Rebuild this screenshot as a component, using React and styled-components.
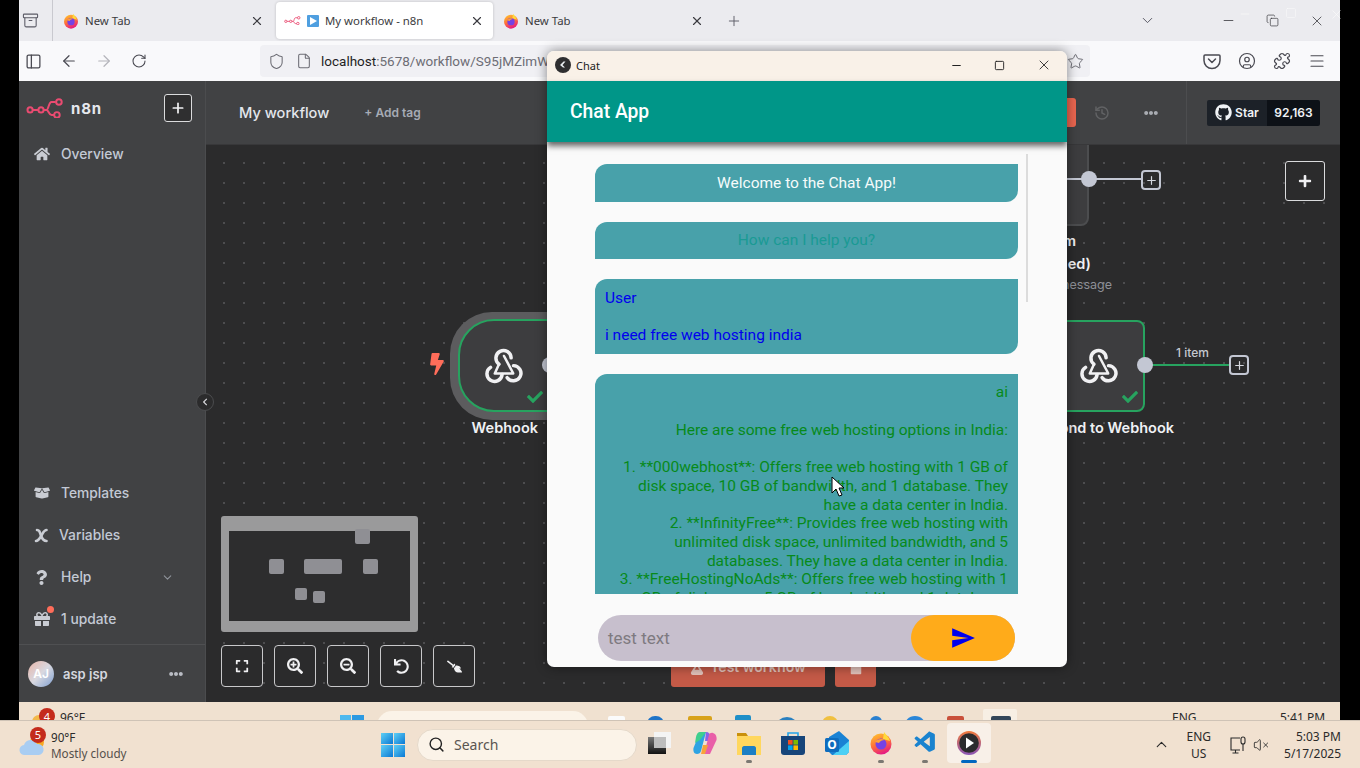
import React from "react";
import styled, { createGlobalStyle } from "styled-components";
import {
  ArrowLeft,
  ArrowRight,
  ChevronDown,
  ChevronUp,
  CircleUser,
  File,
  Menu,
  Minus,
  PanelLeft,
  Plus,
  Puzzle,
  RotateCw,
  Search as SearchIcon,
  Shield,
  Square,
  Star,
  X,
  Copy,
  History,
  VolumeX,
  Archive,
} from "lucide-react";
import {
  FaBolt,
  FaBoxOpen,
  FaBroom,
  FaCheck,
  FaChevronLeft,
  FaEllipsisH,
  FaExpand,
  FaFlask,
  FaGift,
  FaGithub,
  FaHome,
  FaPlus,
  FaQuestion,
  FaSearchMinus,
  FaSearchPlus,
  FaStop,
  FaUndo,
} from "react-icons/fa";
import { MdSend } from "react-icons/md";
import { VscVscode } from "react-icons/vsc";

const GlobalStyle = createGlobalStyle`
  html, body {
    margin: 0;
    padding: 0;
    background: #000;
    overflow: hidden;
  }
  * { box-sizing: border-box; }
`;

const Screen = styled.div`
  position: relative;
  width: 1360px;
  height: 768px;
  overflow: hidden;
  background: #000;
  font-family: "Inter", sans-serif;
`;

const Recording = styled.div`
  width: 1321px;
  height: 720px;
  margin-left: 19px;
  display: flex;
  flex-direction: column;
`;

/* firefox tab strip */
const TabStrip = styled.div`
  height: 41px;
  flex: none;
  background: #ebebef;
  display: flex;
  align-items: center;
  font-family: "Noto Sans", sans-serif;
  font-size: 11.4px;
  color: #3b3b40;
`;

const StripIcon = styled.div`
  width: 22px;
  margin-right: 11px;
  display: flex;
  justify-content: center;
  color: #5b5b66;
`;

const StripDivider = styled.div`
  width: 1px;
  height: 41px;
  background: #c9c9cf;
  margin-right: 3px;
`;

const Tab = styled.div`
  width: 217px;
  height: 37px;
  margin-right: 3px;
  border-radius: 4px;
  padding: 0 9px 0 ${(p) => (p.$active ? "8px" : "7px")};
  display: flex;
  align-items: center;
  gap: 6px;
  background: ${(p) => (p.$active ? "#fff" : "transparent")};
  box-shadow: ${(p) => (p.$active ? "0 0 3px rgba(0,0,0,.2)" : "none")};
`;

const TabTitle = styled.span`
  flex: 1;
  white-space: nowrap;
`;

const PlayFav = styled.span`
  width: 12px;
  height: 12px;
  background: #4f9fe0;
  border-radius: 1px;
  display: flex;
  align-items: center;
  justify-content: center;
  &::after {
    content: "";
    border-left: 7px solid #fff;
    border-top: 4px solid transparent;
    border-bottom: 4px solid transparent;
    margin-left: 1px;
  }
`;

const NewTab = styled.div`
  margin-left: 10px;
  color: #5b5b66;
  display: flex;
`;

const ListTabs = styled.div`
  margin-left: 397px;
  color: #5b5b66;
  display: flex;
`;

const WinControls = styled.div`
  margin-left: 65px;
  display: flex;
  gap: 30px;
  color: #3b3b40;
  align-items: center;
`;

const Ghost = styled.span`
  position: absolute;
  top: 7px;
  left: ${(p) => p.$x}px;
  color: #fff;
  opacity: 0.85;
  display: flex;
`;

/* firefox nav bar */
const NavBar = styled.div`
  height: 40px;
  flex: none;
  background: #f9f9fb;
  display: flex;
  align-items: center;
  color: #5b5b66;
`;

const NavButton = styled.div`
  width: ${(p) => (p.$first ? "28px" : "35px")};
  margin-right: ${(p) => (p.$first ? "4px" : "0")};
  display: flex;
  justify-content: center;
  color: ${(p) => (p.$off ? "#b4b4ba" : "#4a4a52")};
`;

const UrlBar = styled.div`
  width: 830px;
  height: 32px;
  margin-left: 104px;
  background: #f0f0f4;
  border-radius: 4px;
  display: flex;
  align-items: center;
  padding: 0 6px 0 8px;
  gap: 11px;
  font-family: "Roboto", sans-serif;
  font-size: 13.5px;
  color: #6d6d75;
  overflow: hidden;
  white-space: nowrap;
`;

const UrlHost = styled.span`
  color: #1f1f25;
`;

const UrlText = styled.span`
  flex: 1;
  margin-left: -2px;
`;

const NavRight = styled.div`
  margin-left: 113px;
  display: flex;
  gap: 17px;
  color: #4a4a52;
`;

/* n8n */
const N8nApp = styled.div`
  height: 621px;
  flex: none;
  display: flex;
  background: #2b2b2c;
`;

const Sidebar = styled.div`
  width: 187px;
  flex: none;
  background: #414244;
  border-right: 1px solid #4b4c4e;
  display: flex;
  flex-direction: column;
  color: #c3c9d5;
`;

const SideHead = styled.div`
  height: 52px;
  padding: 2px 13px 0 7px;
  display: flex;
  align-items: center;
`;

const Brand = styled.span`
  margin-left: 7px;
  flex: 1;
  font-size: 15px;
  font-weight: 700;
  letter-spacing: 0.8px;
  color: #e6e8ee;
`;

const SquareBtn = styled.button`
  width: ${(p) => p.$size || 28}px;
  height: ${(p) => p.$size || 28}px;
  padding: 0;
  background: #2f2f30;
  color: #f0f0f2;
  border: 1.5px solid #dadbdd;
  border-radius: 3px;
  display: flex;
  align-items: center;
  justify-content: center;
`;

const SideItem = styled.div`
  height: 42px;
  display: flex;
  align-items: center;
  padding-left: 15px;
  font-size: 13.8px;
  font-weight: 500;
  position: relative;
`;

const SideIcon = styled.span`
  width: ${(p) => p.$w || 27}px;
  display: flex;
  color: #c9ccd3;
`;

const SideSpacer = styled.div`
  flex: 1;
`;

const HelpChevron = styled.span`
  margin-left: auto;
  margin-right: 31px;
  display: flex;
  color: #8f939b;
`;

const RedDot = styled.span`
  position: absolute;
  left: 28px;
  top: 8px;
  width: 7px;
  height: 7px;
  border-radius: 50%;
  background: #ff6d5a;
`;

const UserRow = styled.div`
  height: 58px;
  margin-top: 4px;
  border-top: 1px solid #4f5052;
  display: flex;
  align-items: center;
  padding: 0 22px 0 9px;
  font-size: 13px;
  font-weight: 600;
  color: #d5d8df;
`;

const Avatar = styled.span`
  width: 26px;
  height: 26px;
  border-radius: 50%;
  background: linear-gradient(135deg, #e8b5a8, #d8d8e0 50%, #7f9fd0);
  color: #fff;
  font-size: 12px;
  font-weight: 600;
  display: flex;
  align-items: center;
  justify-content: center;
  margin-right: 9px;
`;

const UserName = styled.span`
  flex: 1;
`;

const Main = styled.div`
  flex: 1;
  display: flex;
  flex-direction: column;
  min-width: 0;
`;

const TopBar = styled.div`
  height: 64px;
  flex: none;
  position: relative;
  z-index: 1;
  background: #414244;
  border-bottom: 1px solid #38383a;
  display: flex;
  align-items: center;
  padding: 0 20px 0 33px;
  white-space: nowrap;
`;

const WorkflowName = styled.span`
  flex: none;
  font-size: 14.6px;
  font-weight: 500;
  color: #e3e6ec;
`;

const AddTag = styled.span`
  flex: none;
  margin-left: 35px;
  font-size: 12px;
  font-weight: 600;
  color: #a6abb5;
`;

const SaveEdge = styled.div`
  margin-left: auto;
  width: 9px;
  height: 29px;
  background: #ea6650;
  border-radius: 0 3px 3px 0;
`;

const TopIcon = styled.span`
  margin-left: ${(p) => p.$ml}px;
  color: ${(p) => p.$color};
  display: flex;
`;

const TopDivider = styled.div`
  width: 1px;
  height: 63px;
  margin-left: 28px;
  background: #4c4d4f;
`;

const StarWidget = styled.div`
  margin-left: 20px;
  height: 26px;
  display: flex;
  font-size: 12px;
  font-weight: 600;
  color: #f0f3f6;
`;

const StarLabel = styled.span`
  width: 60px;
  background: #1c2128;
  border-radius: 2px 0 0 2px;
  display: flex;
  align-items: center;
  justify-content: center;
  gap: 3px;
`;

const StarCount = styled.span`
  width: 53px;
  background: #0d1117;
  border-radius: 0 2px 2px 0;
  display: flex;
  align-items: center;
  justify-content: center;
`;

const Canvas = styled.div`
  flex: 1;
  position: relative;
  background-color: #2b2b2c;
  background-image: radial-gradient(#4d4d4f 0.8px, transparent 1px);
  background-size: 20px 20px;
  background-position: 8px 8px;
`;

const Collapse = styled.span`
  position: absolute;
  left: -10px;
  top: 248px;
  width: 18px;
  height: 18px;
  border-radius: 50%;
  background: #2b2b2c;
  border: 1px solid #4b4c4e;
  color: #d8d8dc;
  display: flex;
  align-items: center;
  justify-content: center;
`;

const NodeHalo = styled.div`
  position: absolute;
  left: 244px;
  top: 167px;
  width: 140px;
  height: 108px;
  border-radius: 42px;
  background: #5c5c5e;
`;

const NodeCard = styled.div`
  position: absolute;
  left: ${(p) => p.$x}px;
  top: ${(p) => p.$y}px;
  width: ${(p) => p.$w}px;
  height: ${(p) => p.$h}px;
  border: 2px solid ${(p) => p.$border};
  border-radius: ${(p) => p.$radius || "8px"};
  background: #3d3d3f;
  color: #eceef1;
`;

const NodeGlyph = styled.span`
  position: absolute;
  left: ${(p) => p.$x}px;
  top: ${(p) => p.$y}px;
  color: #f1f1f3;
  display: flex;
`;

const NodeCheck = styled.span`
  position: absolute;
  left: ${(p) => p.$x}px;
  top: ${(p) => p.$y}px;
  color: #27a35f;
  display: flex;
`;

const Trigger = styled.span`
  position: absolute;
  left: 220px;
  top: 208px;
  color: #ff6d5a;
  display: flex;
`;

const Handle = styled.span`
  position: absolute;
  left: ${(p) => p.$x - 8}px;
  top: ${(p) => p.$y - 8}px;
  width: 16px;
  height: 16px;
  border-radius: 50%;
  background: #c3c7d3;
`;

const Wire = styled.span`
  position: absolute;
  left: ${(p) => p.$x}px;
  top: ${(p) => p.$y}px;
  width: ${(p) => p.$w}px;
  height: 2px;
  background: ${(p) => p.$color};
`;

const PlusBox = styled.span`
  position: absolute;
  left: ${(p) => p.$x}px;
  top: ${(p) => p.$y}px;
  width: 20px;
  height: 20px;
  border: 2px solid #c3c7d3;
  border-radius: 4px;
  color: #d5d8df;
  display: flex;
  align-items: center;
  justify-content: center;
`;

const NodeLabel = styled.span`
  position: absolute;
  right: ${(p) => 1134 - p.$right}px;
  top: ${(p) => p.$y}px;
  font-size: ${(p) => p.$size || 14.5}px;
  font-weight: ${(p) => p.$weight || 600};
  color: ${(p) => p.$color || "#f0f1f4"};
  white-space: nowrap;
`;

const AddNode = styled(SquareBtn)`
  position: absolute;
  left: 1079px;
  top: 16px;
  background: #2b2b2c;
`;

const Minimap = styled.div`
  position: absolute;
  left: 15px;
  top: 371px;
  width: 197px;
  height: 116px;
  background: #2d2d2e;
  border: solid #9a9a9b;
  border-width: 15px 8px 11px 8px;
  border-radius: 3px;
`;

const MiniNode = styled.span`
  position: absolute;
  left: ${(p) => p.$x}px;
  top: ${(p) => p.$y}px;
  width: ${(p) => p.$w}px;
  height: ${(p) => p.$h}px;
  background: #8f8f94;
  border-radius: 2px;
`;

const Tools = styled.div`
  position: absolute;
  left: 15px;
  top: 500px;
  display: flex;
  gap: 11px;
`;

const ToolBtn = styled(SquareBtn)`
  background: #2b2b2c;
  border-color: #c8c8ca;
  border-radius: 4px;
`;

const MirroredBroom = styled(FaBroom)`
  transform: scaleX(-1);
`;

const TestButtons = styled.div`
  position: absolute;
  left: 465px;
  top: 500px;
  display: flex;
  gap: 10px;
`;

const TestBtn = styled.div`
  height: 42px;
  width: ${(p) => p.$w}px;
  background: #c45a47;
  border-radius: 3px;
  color: #e2c3bb;
  font-size: 14px;
  font-weight: 600;
  display: flex;
  align-items: flex-end;
  justify-content: center;
  gap: 6px;
  padding-bottom: 12px;
`;

/* taskbars */
const InnerBar = styled.div`
  height: 18px;
  flex: none;
  background: #f0e1d0;
  overflow: hidden;
  position: relative;
  font-family: "Noto Sans", sans-serif;
  font-size: 12px;
  color: #2a2a2a;
`;

const InnerText = styled.span`
  position: absolute;
  left: ${(p) => p.$x - 19}px;
  top: 7px;
  white-space: nowrap;
`;

const InnerPill = styled.span`
  position: absolute;
  left: 358px;
  top: 9px;
  width: 211px;
  height: 30px;
  border-radius: 15px;
  background: #fbf3e8;
`;

const Peek = styled.span`
  position: absolute;
  left: ${(p) => p.$x - 19}px;
  top: ${(p) => p.$y}px;
  width: ${(p) => p.$w}px;
  height: 20px;
  border-radius: ${(p) => p.$radius || "2px 2px 0 0"};
  background: ${(p) => p.$color};
`;

const Badge = styled.span`
  position: absolute;
  left: ${(p) => p.$x}px;
  top: ${(p) => p.$y}px;
  width: 16px;
  height: 16px;
  border-radius: 50%;
  background: #c42b1c;
  color: #fff;
  font-size: 11px;
  display: flex;
  align-items: center;
  justify-content: center;
`;

const Taskbar = styled.div`
  height: 48px;
  background: #f1e1d0;
  border-top: 1px solid #cfc3b6;
  display: flex;
  align-items: center;
  font-family: "Noto Sans", sans-serif;
  color: #2a2a2a;
`;

const Weather = styled.div`
  width: 381px;
  flex: none;
  padding-left: 19px;
  display: flex;
  align-items: center;
  gap: 6px;
  position: relative;
`;

const WeatherText = styled.div`
  font-size: 11.7px;
  line-height: 16px;
`;

const WeatherSub = styled.div`
  color: #55504b;
`;

const StartBtn = styled.div`
  width: 24px;
  height: 24px;
  flex: none;
  display: grid;
  grid-template-columns: 1fr 1fr;
  gap: 1px;
`;

const WinPane = styled.span`
  background: linear-gradient(135deg, #5fd0f5, #0a78d4);
`;

const SearchPill = styled.div`
  width: 220px;
  height: 32px;
  margin-left: 12px;
  flex: none;
  background: #fbf3e8;
  border: 1px solid #e5d9ca;
  border-radius: 16px;
  display: flex;
  align-items: center;
  gap: 9px;
  padding-left: 10px;
  font-size: 14px;
  color: #5a5550;
`;

const TaskIcons = styled.div`
  display: flex;
  align-items: center;
  flex: none;
`;

const TaskIcon = styled.div`
  width: ${(p) => p.$w || 44}px;
  height: 40px;
  margin-top: -4px;
  position: relative;
  display: flex;
  align-items: center;
  justify-content: center;
  border-radius: 4px;
  background: ${(p) => (p.$active ? "rgba(255,255,255,.5)" : "transparent")};
  &::after {
    content: "";
    display: ${(p) => (p.$run || p.$active ? "block" : "none")};
    position: absolute;
    bottom: 0;
    left: 50%;
    transform: translateX(-50%);
    width: ${(p) => (p.$active ? "16px" : "6px")};
    height: 3px;
    border-radius: 2px;
    background: ${(p) => (p.$active ? "#0067c0" : "#7b7872")};
  }
`;

const Tray = styled.div`
  margin-left: auto;
  padding-right: 19px;
  display: flex;
  align-items: center;
  font-size: 12px;
  color: #2a2a2a;
`;

const TrayStack = styled.div`
  text-align: ${(p) => p.$align};
  line-height: 17px;
  margin-left: ${(p) => p.$ml}px;
`;

const TrayIcon = styled.span`
  display: flex;
  margin-left: ${(p) => p.$ml}px;
`;

/* chat window */
const ChatWindow = styled.div`
  position: absolute;
  left: 547px;
  top: 51px;
  width: 520px;
  height: 616px;
  background: #fafafa;
  border-radius: 7px;
  overflow: hidden;
  box-shadow: 0 0 12px rgba(0, 0, 0, 0.45);
  display: flex;
  flex-direction: column;
  font-family: "Roboto", sans-serif;
  z-index: 5;
`;

const ChatTitleBar = styled.div`
  height: 30px;
  flex: none;
  background: #f9f1e8;
  display: flex;
  align-items: center;
  padding: 0 0 2px 8px;
  font-family: "Noto Sans", sans-serif;
  font-size: 11px;
  color: #222;
`;

const ChatTitle = styled.span`
  margin-left: 5px;
  flex: 1;
`;

const ChatControls = styled.div`
  display: flex;
  gap: 31px;
  padding-right: 15px;
  color: #222;
  align-items: center;
`;

const AppBar = styled.div`
  height: 61px;
  flex: none;
  background: #009688;
  color: #fff;
  display: flex;
  align-items: center;
  padding-left: 23px;
  font-size: 19.3px;
  font-weight: 500;
  box-shadow: 0 4px 6px rgba(0, 0, 0, 0.6);
  position: relative;
  z-index: 1;
`;

const MessageArea = styled.div`
  height: 452px;
  flex: none;
  position: relative;
  overflow: hidden;
  padding: 22px 49px 0 48px;
  display: flex;
  flex-direction: column;
  gap: 19.8px;
`;

const ScrollThumb = styled.span`
  position: absolute;
  left: 479px;
  top: 12px;
  width: 2px;
  height: 148px;
  background: #dcdcdc;
`;

const Bubble = styled.div`
  flex: none;
  background: #48a1aa;
  border-radius: 12px 0 12px 0;
  padding: 9.5px 10px;
  font-size: 15.5px;
  line-height: 18.7px;
  white-space: pre-line;
  color: ${(p) => p.$color};
  text-align: ${(p) => p.$align};
`;

const Composer = styled.div`
  margin: 21px 52px 0 51px;
  height: 46px;
  border-radius: 23px;
  background: #c7bfcd;
  display: flex;
  align-items: center;
  justify-content: space-between;
  padding-left: 10px;
  font-size: 17px;
  color: #7e7a80;
`;

const SendBtn = styled.div`
  width: 104px;
  height: 46px;
  border-radius: 23px;
  background: #ffab1a;
  color: #0000ee;
  display: flex;
  align-items: center;
  justify-content: center;
`;

const Pointer = styled.svg`
  position: absolute;
  left: 830px;
  top: 476px;
  z-index: 6;
`;

const aiText = `ai

Here are some free web hosting options in India:

1. **000webhost**: Offers free web hosting with 1 GB of disk space, 10 GB of bandwidth, and 1 database. They have a data center in India.
2. **InfinityFree**: Provides free web hosting with unlimited disk space, unlimited bandwidth, and 5 databases. They have a data center in India.
3. **FreeHostingNoAds**: Offers free web hosting with 1 GB of disk space, 5 GB of bandwidth, and 1 database.`;

const N8nLogo = ({ w = 38 }) => (
  <svg width={w} height={w * 0.55} viewBox="0 0 38 21" fill="none" stroke="#ea4b71" strokeWidth="2">
    <circle cx="4" cy="12" r="2.6" />
    <circle cx="15" cy="12" r="2.6" />
    <circle cx="33" cy="4" r="2.8" />
    <circle cx="31" cy="17" r="2.8" />
    <path d="M6.6 12h5.800M17.600 12h3c2 0 2-8 5-8h4.200M20.600 12c2 0 2 5 5 5h2.600" />
  </svg>
);

const WebhookGlyph = ({ size = 38 }) => (
  <svg width={size} height={size} viewBox="0 0 24 24" fill="none" stroke="currentColor" strokeLinecap="round" strokeWidth="2.2">
    <path d="M8.800 11.500A4.800 4.800 0 1 1 16.500 7.500" />
    <path d="M3.500 13.500A4.800 4.800 0 1 0 10.800 18" />
    <path d="M18 12.400A4.800 4.800 0 1 1 14 20" />
    <path d="M12 6.300L17.800 17.200M6.200 17.400H17.800M6.200 17.400L8.800 11.500" strokeWidth="1.600" />
  </svg>
);

const Firefox = ({ size = 16, id = "ff" }) => (
  <svg width={size} height={size} viewBox="0 0 24 24">
    <defs>
      <linearGradient id={id} x1="0.2" y1="0" x2="0.6" y2="1">
        <stop offset="0" stopColor="#ffc22e" />
        <stop offset="0.5" stopColor="#ff7139" />
        <stop offset="1" stopColor="#e31587" />
      </linearGradient>
    </defs>
    <circle cx="12" cy="13" r="10.500" fill={`url(#${id})`} />
    <path d="M15 1c2 3 5 5 6 9l-7-2z" fill="#ffd93b" />
    <circle cx="12" cy="13" r="5.500" fill="#7542e5" />
    <path d="M6 11c2-3 7-4 10-2-3 0-5 1-6 3z" fill="#ffa436" />
  </svg>
);

const TaskViewIcon = () => (
  <svg width="24" height="24" viewBox="0 0 24 24">
    <defs>
      <linearGradient id="tv1" x1="0" y1="0" x2="0" y2="1">
        <stop offset="0" stopColor="#777" />
        <stop offset="1" stopColor="#111" />
      </linearGradient>
    </defs>
    <rect x="0" y="6" width="18" height="17" fill="url(#tv1)" />
    <rect x="6" y="1" width="17" height="16" fill="#f4f4f4" />
    <rect x="6" y="6" width="12" height="11" fill="#bdbdbd" />
  </svg>
);

const CopilotIcon = () => (
  <svg width="24" height="24" viewBox="0 0 24 24">
    <path d="M7 1h6L8 20c-.5 2-2 3-4 3-3 0-4-3-3.500-6z" fill="#2ea3e3" />
    <path d="M7 1c-2 0-3.500 2-4 5l-1 6 5-3 6-8z" fill="#3fcf8e" />
    <path d="M13 1c3 0 4 2 5 5l1 4h-7z" fill="#8a63e8" />
    <path d="M17 23h-6l5-19c.5-1.500 2-2.500 4-2 3 1 4 4 3.500 7z" fill="#e95fa8" />
    <path d="M8 23l2-9h5l-3 9z" fill="#f7a33a" />
  </svg>
);

const ExplorerIcon = () => (
  <svg width="24" height="24" viewBox="0 0 24 24">
    <path d="M0 2h9l2 3h13v19H0z" fill="#c9900c" />
    <rect x="0" y="5" width="24" height="19" fill="#ffd75e" />
    <path d="M5 17c0-1 1-2 2-2h10c1 0 2 1 2 2v7H5z" fill="#1c7fc4" />
  </svg>
);

const StoreIcon = () => (
  <svg width="24" height="24" viewBox="0 0 24 24">
    <path d="M7 6V2h10v4" fill="none" stroke="#25a4e8" strokeWidth="1.600" />
    <path d="M0 5h24v16a3 3 0 0 1-3 3H3a3 3 0 0 1-3-3z" fill="#17457a" />
    <rect x="7" y="9" width="4.600" height="4.600" fill="#f25022" />
    <rect x="12.400" y="9" width="4.600" height="4.600" fill="#7fba00" />
    <rect x="7" y="14.400" width="4.600" height="4.600" fill="#00a4ef" />
    <rect x="12.400" y="14.400" width="4.600" height="4.600" fill="#ffb900" />
  </svg>
);

const OutlookIcon = () => (
  <svg width="24" height="24" viewBox="0 0 24 24">
    <path d="M4 6l10-6 10 9v12l-3 3H7l-3-3z" fill="#1a82d4" />
    <path d="M8 24l16-14v11l-3 3z" fill="#4cd0f5" />
    <rect x="0" y="7" width="14" height="14" rx="1.500" fill="#0f6cbd" />
    <text x="7" y="18" textAnchor="middle" fontSize="12" fontWeight="700" fill="#fff" fontFamily="Noto Sans, sans-serif">
      O
    </text>
  </svg>
);

const PlayerIcon = () => (
  <svg width="24" height="24" viewBox="0 0 24 24">
    <defs>
      <linearGradient id="pl" x1="0" y1="0" x2="0" y2="1">
        <stop offset="0" stopColor="#f0793a" />
        <stop offset="1" stopColor="#8a55b8" />
      </linearGradient>
    </defs>
    <circle cx="12" cy="12" r="12" fill="url(#pl)" />
    <circle cx="12" cy="12" r="9.800" fill="#2b2b2d" />
    <path d="M9 6.500l8 5.500-8 5.500z" fill="#fff" />
  </svg>
);

const ChatFavicon = () => (
  <svg width="16" height="16" viewBox="0 0 16 16">
    <circle cx="8" cy="8" r="8" fill="#2e2e30" />
    <path d="M5 8l3.500-3.500h2L7.500 8l2.500 2.500H8z" fill="#e9eef2" />
  </svg>
);

const VariablesIcon = () => (
  <svg width="15" height="15" viewBox="0 0 15 15" fill="none" stroke="#c9ccd3" strokeWidth="2.600" strokeLinecap="round">
    <path d="M3 2c2 0 2.500 1 4 5.500S10 13 12.500 13" />
    <path d="M12.500 2C10 2 9 5 7.500 7.500S4.500 13 2 13" />
  </svg>
);

const PocketIcon = () => (
  <svg width="18" height="18" viewBox="0 0 18 18" fill="none" stroke="currentColor" strokeWidth="1.500" strokeLinecap="round" strokeLinejoin="round">
    <path d="M2 3h14a1 1 0 0 1 1 1v4.500a8 8 0 0 1-16 0V4a1 1 0 0 1 1-1z" />
    <path d="M5.500 7L9 10.500 12.500 7" />
  </svg>
);

const NetworkIcon = () => (
  <svg width="20" height="20" viewBox="0 0 20 20" fill="none" stroke="#2a2a2a" strokeWidth="1.100">
    <path d="M12 3H3v12h9M7.500 15v3M4.500 18h6" />
    <rect x="13" y="2" width="4" height="7" rx="2" />
    <path d="M15 9v7" />
  </svg>
);

const App = () => (
  <Screen>
    <GlobalStyle />
    <Recording>
      <TabStrip>
        <StripIcon>
          <Archive size={17} strokeWidth={1.5} />
        </StripIcon>
        <StripDivider />
        <Tab>
          <Firefox id="ff1" />
          <TabTitle>New Tab</TabTitle>
          <X size={14} />
        </Tab>
        <Tab $active>
          <N8nLogo w={17} />
          <PlayFav />
          <TabTitle>My workflow - n8n</TabTitle>
          <X size={14} />
        </Tab>
        <Tab>
          <Firefox id="ff2" />
          <TabTitle>New Tab</TabTitle>
          <X size={14} />
        </Tab>
        <NewTab>
          <Plus size={16} strokeWidth={1.4} />
        </NewTab>
        <ListTabs>
          <ChevronDown size={17} strokeWidth={1.4} />
        </ListTabs>
        <WinControls>
          <Minus size={15} strokeWidth={1.3} />
          <Copy size={13} strokeWidth={1.3} />
          <X size={16} strokeWidth={1.2} />
        </WinControls>
      </TabStrip>
      <NavBar>
        <NavButton $first>
          <PanelLeft size={17} strokeWidth={1.8} />
        </NavButton>
        <NavButton>
          <ArrowLeft size={18} strokeWidth={1.6} />
        </NavButton>
        <NavButton $off>
          <ArrowRight size={18} strokeWidth={1.6} />
        </NavButton>
        <NavButton>
          <RotateCw size={16} strokeWidth={1.6} />
        </NavButton>
        <UrlBar>
          <Shield size={17} strokeWidth={1.5} />
          <File size={16} strokeWidth={1.6} />
          <UrlText>
            <UrlHost>localhost</UrlHost>:5678/workflow/S95jMZimWyE2xQ
          </UrlText>
          <Star size={17} strokeWidth={1.4} />
        </UrlBar>
        <NavRight>
          <PocketIcon />
          <CircleUser size={18} strokeWidth={1.6} />
          <Puzzle size={18} strokeWidth={1.6} />
          <Menu size={18} strokeWidth={1.5} />
        </NavRight>
      </NavBar>
      <N8nApp>
        <Sidebar>
          <SideHead>
            <N8nLogo />
            <Brand>n8n</Brand>
            <SquareBtn>
              <Plus size={16} strokeWidth={2.6} />
            </SquareBtn>
          </SideHead>
          <SideItem>
            <SideIcon>
              <FaHome size={16} />
            </SideIcon>
            Overview
          </SideItem>
          <SideSpacer />
          <SideItem>
            <SideIcon>
              <FaBoxOpen size={16} />
            </SideIcon>
            Templates
          </SideItem>
          <SideItem>
            <SideIcon $w={25}>
              <VariablesIcon />
            </SideIcon>
            Variables
          </SideItem>
          <SideItem>
            <SideIcon>
              <FaQuestion size={15} />
            </SideIcon>
            Help
            <HelpChevron>
              <ChevronDown size={13} />
            </HelpChevron>
          </SideItem>
          <SideItem>
            <SideIcon>
              <FaGift size={16} />
            </SideIcon>
            <RedDot />1 update
          </SideItem>
          <UserRow>
            <Avatar>AJ</Avatar>
            <UserName>asp jsp</UserName>
            <FaEllipsisH size={14} color="#b9bcc4" />
          </UserRow>
        </Sidebar>
        <Main>
          <TopBar>
            <WorkflowName>My workflow</WorkflowName>
            <AddTag>+ Add tag</AddTag>
            <SaveEdge />
            <TopIcon $ml={18} $color="#616264">
              <History size={16} strokeWidth={2.2} />
            </TopIcon>
            <TopIcon $ml={34} $color="#a9acb2">
              <FaEllipsisH size={14} />
            </TopIcon>
            <TopDivider />
            <StarWidget>
              <StarLabel>
                <FaGithub size={17} />
                Star
              </StarLabel>
              <StarCount>92,163</StarCount>
            </StarWidget>
          </TopBar>
          <Canvas>
            <Collapse>
              <FaChevronLeft size={8} />
            </Collapse>

            <NodeCard $x={700} $y={-40} $w={183} $h={121} $border="#4c4d4f" />
            <Wire $x={860} $y={33} $w={75} $color="#c3c7d3" />
            <Handle $x={883} $y={34} />
            <PlusBox $x={935} $y={25}>
              <Plus size={13} strokeWidth={2.2} />
            </PlusBox>
            <NodeLabel $right={870} $y={87}>
              m
            </NodeLabel>
            <NodeLabel $right={885} $y={110}>
              ed)
            </NodeLabel>
            <NodeLabel $right={906} $y={132} $size={12.5} $weight={400} $color="#8e9097">
              message
            </NodeLabel>

            <NodeHalo />
            <NodeCard $x={252} $y={174} $w={140} $h={93} $border="#27a35f" $radius="36px" />
            <NodeGlyph $x={279} $y={201}>
              <WebhookGlyph />
            </NodeGlyph>
            <NodeCheck $x={321} $y={244}>
              <FaCheck size={16} />
            </NodeCheck>
            <Handle $x={344} $y={220} />
            <Trigger>
              <FaBolt size={22} />
            </Trigger>
            <NodeLabel $right={332} $y={274}>
              Webhook
            </NodeLabel>

            <NodeCard $x={750} $y={175} $w={189} $h={92} $border="#27a35f" />
            <NodeGlyph $x={874} $y={201}>
              <WebhookGlyph />
            </NodeGlyph>
            <NodeCheck $x={916} $y={244}>
              <FaCheck size={16} />
            </NodeCheck>
            <Wire $x={939} $y={219} $w={84} $color="#27a35f" />
            <Handle $x={939} $y={220} />
            <PlusBox $x={1023} $y={210}>
              <Plus size={13} strokeWidth={2.2} />
            </PlusBox>
            <NodeLabel $right={1003} $y={200} $size={12} $weight={500} $color="#c5c8d0">
              1 item
            </NodeLabel>
            <NodeLabel $right={968} $y={274}>
              Respond to Webhook
            </NodeLabel>

            <AddNode $size={40}>
              <FaPlus size={14} />
            </AddNode>

            <Minimap>
              <MiniNode $x={126} $y={-2} $w={15} $h={15} />
              <MiniNode $x={40} $y={28} $w={15} $h={15} />
              <MiniNode $x={75} $y={28} $w={38} $h={15} />
              <MiniNode $x={134} $y={28} $w={15} $h={15} />
              <MiniNode $x={66} $y={57} $w={12} $h={12} />
              <MiniNode $x={84} $y={60} $w={12} $h={12} />
            </Minimap>
            <Tools>
              <ToolBtn $size={42}>
                <FaExpand size={14} />
              </ToolBtn>
              <ToolBtn $size={42}>
                <FaSearchPlus size={16} />
              </ToolBtn>
              <ToolBtn $size={42}>
                <FaSearchMinus size={16} />
              </ToolBtn>
              <ToolBtn $size={42}>
                <FaUndo size={15} />
              </ToolBtn>
              <ToolBtn $size={42}>
                <MirroredBroom size={15} />
              </ToolBtn>
            </Tools>
            <TestButtons>
              <TestBtn $w={154}>
                <FaFlask size={14} />
                Test workflow
              </TestBtn>
              <TestBtn $w={41}>
                <FaStop size={12} />
              </TestBtn>
            </TestButtons>
          </Canvas>
        </Main>
      </N8nApp>
      <InnerBar>
        <Peek $x={32} $y={13} $w={14} $color="#f2b84a" $radius="8px" />
        <Badge $x={20} $y={6}>
          4
        </Badge>
        <InnerText $x={60}>96°F</InnerText>
        <Peek $x={340} $y={13} $w={11} $color="#4fb9ee" $radius="0" />
        <Peek $x={352} $y={13} $w={12} $color="#2c9ae2" $radius="0" />
        <InnerPill />
        <Peek $x={608} $y={14} $w={17} $color="#fbfbfb" />
        <Peek $x={647} $y={14} $w={17} $color="#1f74c8" $radius="8px 8px 0 0" />
        <Peek $x={688} $y={14} $w={24} $color="#d8a21a" />
        <Peek $x={735} $y={13} $w={16} $color="#1f8fc8" />
        <Peek $x={775} $y={15} $w={24} $color="#2a80c0" $radius="12px 12px 0 0" />
        <Peek $x={822} $y={14} $w={16} $color="#f0c040" $radius="8px 8px 0 0" />
        <Peek $x={870} $y={14} $w={12} $color="#2a80d0" $radius="6px 6px 0 0" />
        <Peek $x={904} $y={14} $w={22} $color="#2a86d8" $radius="11px 11px 0 0" />
        <Peek $x={947} $y={14} $w={17} $color="#c9503a" />
        <Peek $x={983} $y={7} $w={34} $color="#f7efe4" />
        <Peek $x={991} $y={14} $w={20} $color="#33475a" />
        <InnerText $x={1172}>ENG</InnerText>
        <InnerText $x={1280}>5:41 PM</InnerText>
      </InnerBar>
    </Recording>

    <Ghost $x={1238}>
      <Minus size={14} strokeWidth={1} />
    </Ghost>
    <Ghost $x={1285}>
      <Square size={12} strokeWidth={1} />
    </Ghost>
    <Ghost $x={1329}>
      <X size={15} strokeWidth={1} />
    </Ghost>

    <Taskbar>
      <Weather>
        <svg width="26" height="22" viewBox="0 0 26 22">
          <circle cx="18" cy="8" r="7" fill="#f7a823" />
          <path d="M6 21a5 5 0 0 1-1-10 7 7 0 0 1 13-1 5.500 5.500 0 0 1 2 11z" fill="#a9cdf2" />
        </svg>
        <Badge $x={30} $y={-2}>
          5
        </Badge>
        <WeatherText>
          90°F
          <WeatherSub>Mostly cloudy</WeatherSub>
        </WeatherText>
      </Weather>
      <StartBtn>
        <WinPane />
        <WinPane />
        <WinPane />
        <WinPane />
      </StartBtn>
      <SearchPill>
        <SearchIcon size={17} color="#222" strokeWidth={2} />
        Search
      </SearchPill>
      <TaskIcons>
        <TaskIcon $w={46}>
          <TaskViewIcon />
        </TaskIcon>
        <TaskIcon>
          <CopilotIcon />
        </TaskIcon>
        <TaskIcon $run>
          <ExplorerIcon />
        </TaskIcon>
        <TaskIcon>
          <StoreIcon />
        </TaskIcon>
        <TaskIcon>
          <OutlookIcon />
        </TaskIcon>
        <TaskIcon $run>
          <Firefox size={24} id="ff3" />
        </TaskIcon>
        <TaskIcon $run>
          <VscVscode size={25} color="#1a83cf" />
        </TaskIcon>
        <TaskIcon $active>
          <PlayerIcon />
        </TaskIcon>
      </TaskIcons>
      <Tray>
        <ChevronUp size={17} strokeWidth={1.6} />
        <TrayStack $align="center" $ml={16}>
          ENG
          <br />
          US
        </TrayStack>
        <TrayIcon $ml={17}>
          <NetworkIcon />
        </TrayIcon>
        <TrayIcon $ml={5}>
          <VolumeX size={16} strokeWidth={1.3} />
        </TrayIcon>
        <TrayStack $align="right" $ml={15}>
          5:03 PM
          <br />
          5/17/2025
        </TrayStack>
      </Tray>
    </Taskbar>

    <ChatWindow>
      <ChatTitleBar>
        <ChatFavicon />
        <ChatTitle>Chat</ChatTitle>
        <ChatControls>
          <Minus size={13} strokeWidth={2} />
          <Square size={11} strokeWidth={2} />
          <X size={16} strokeWidth={1.3} />
        </ChatControls>
      </ChatTitleBar>
      <AppBar>Chat App</AppBar>
      <MessageArea>
        <ScrollThumb />
        <Bubble $color="#f5fbfb" $align="center">
          Welcome to the Chat App!
        </Bubble>
        <Bubble $color="#1a9a94" $align="center">
          How can I help you?
        </Bubble>
        <Bubble $color="#0000ee" $align="left">
          {"User\n\ni need free web hosting india"}
        </Bubble>
        <Bubble $color="#078a1a" $align="right">
          {aiText}
        </Bubble>
      </MessageArea>
      <Composer>
        test text
        <SendBtn>
          <MdSend size={26} />
        </SendBtn>
      </Composer>
    </ChatWindow>

    <Pointer width="14" height="22" viewBox="0 0 14 22">
      <path d="M2 1v16l4-4 3 7 3-1-3-7h5z" fill="#fff" stroke="#000" strokeWidth="1" />
    </Pointer>
  </Screen>
);

export default App;
